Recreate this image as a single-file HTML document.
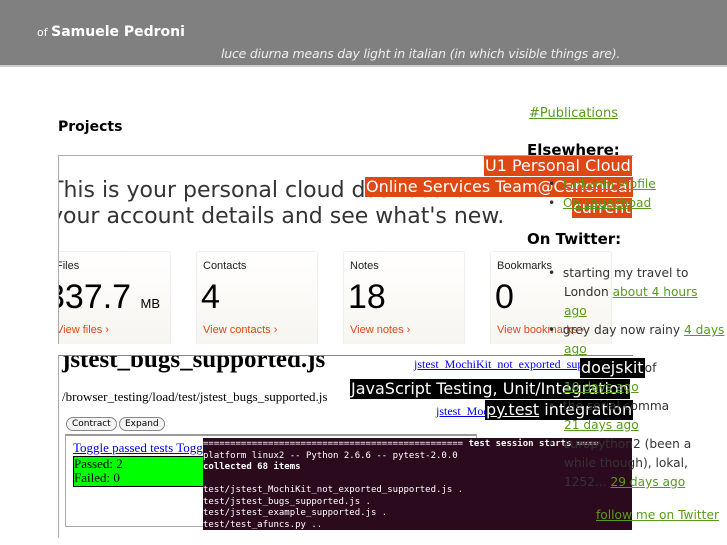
<!DOCTYPE html>
<html><head><meta charset="utf-8"><style>
body{margin:0;width:727px;height:545px;overflow:hidden;background:#fff;font-family:"DejaVu Sans","Liberation Sans",sans-serif;position:relative}
.a{position:absolute;white-space:nowrap}
a,.l{color:#5a9a1a;text-decoration:underline}
.or{background:#dd4814;color:#fff;font-size:16px;line-height:20px;padding:0 1px}
.bk{background:#000;color:#fff;font-size:16px;line-height:20px;padding:0 1px}
.tw{font-size:12.2px;color:#333;line-height:19px}
.card{position:absolute;top:95px;width:120px;height:100px;background:linear-gradient(#fff,#f6f4ee);border:1px solid #eee;border-radius:3px}
.card .t{position:absolute;left:6px;top:8px;font-size:11px;color:#222;font-family:"Liberation Sans",sans-serif}
.card .n{position:absolute;left:4px;top:26px;font-size:34px;color:#000;font-family:"Liberation Sans",sans-serif}
.card .v{position:absolute;left:6px;top:72px;font-size:11px;color:#dd4814;font-family:"Liberation Sans",sans-serif}
.ser{font-family:"Liberation Serif",serif}
.mono{font-family:"DejaVu Sans Mono","Liberation Mono",monospace;font-size:9px;color:#fff;line-height:11.5px}
</style></head><body>
<div class="a" style="left:0;top:0;width:727px;height:65px;background:#808080;border-bottom:2px solid #ccc"></div>
<div class="a" style="left:37px;top:24px;color:#fff;font-size:11px">of <span style="font-size:14px;font-weight:bold">Samuele Pedroni</span></div>
<div class="a" style="left:221px;top:46px;color:#eee;font-size:12.5px;font-style:italic;letter-spacing:-0.2px">luce diurna means day light in italian (in which visible things are).</div>
<div class="a" style="left:58px;top:119px;font-size:14px;font-weight:bold">Projects</div>
<div class="a l" style="left:529px;top:106px;font-size:13px">#Publications</div>

<!-- project 1 -->
<div class="a" style="left:58px;top:155px;width:574px;height:188px;border-top:1px solid #aaa;border-left:1px solid #aaa;overflow:hidden;background:#fff">
 <div class="a" style="left:-9px;top:22px;font-size:22px;color:#333;line-height:26px;font-family:'DejaVu Sans',sans-serif">This is your personal cloud dashboard<br>your account details and see what's new.</div>
 <div class="card" style="left:-10px"><div class="t">Files</div><div class="n" style="left:-4px">337.7 <span style="font-size:13px">MB</span></div><div class="v">View files ›</div></div>
 <div class="card" style="left:137px"><div class="t">Contacts</div><div class="n">4</div><div class="v">View contacts ›</div></div>
 <div class="card" style="left:284px"><div class="t">Notes</div><div class="n">18</div><div class="v">View notes ›</div></div>
 <div class="card" style="left:431px"><div class="t">Bookmarks</div><div class="n">0</div><div class="v">View bookmarks ›</div></div>
</div>
<div class="a or" style="left:484px;top:156px">U1 Personal Cloud</div>
<div class="a or" style="left:365px;top:177px">Online Services Team@Canonical</div>
<div class="a or" style="left:572px;top:198px">current</div>

<!-- project 2 -->
<div class="a" style="left:58px;top:355px;width:574px;height:182px;border-top:1px solid #888;border-left:1px solid #aaa;overflow:hidden;background:#fff">
 <div class="a ser" style="left:3px;top:-10px;font-size:25px;font-weight:bold">jstest_bugs_supported.js</div>
 <div class="a ser" style="left:3px;top:33px;font-size:13px">/browser_testing/load/test/jstest_bugs_supported.js</div>
 <div class="a ser" style="left:355px;top:1px;font-size:12px;color:#00e;text-decoration:underline">jstest_MochiKit_not_exported_supported</div>
 <div class="a ser" style="left:377px;top:48px;font-size:12px;color:#00e;text-decoration:underline">jstest_MochiKit</div>
 <div class="a" style="left:7px;top:61px;font-size:9px;border:1px solid #888;border-radius:7px;padding:1px 5px;background:#f4f4f4">Contract</div>
 <div class="a" style="left:60px;top:61px;font-size:9px;border:1px solid #888;border-radius:7px;padding:1px 5px;background:#f4f4f4">Expand</div>
 <div class="a" style="left:6px;top:78px;width:410px;height:90px;border:1px solid #aaa;border-top:2px solid #999"></div>
 <div class="a ser" style="left:14px;top:84px;font-size:13px;color:#00e;text-decoration:underline">Toggle passed tests Toggle</div>
 <div class="a ser" style="left:14px;top:100px;width:130px;height:29px;background:#0f0;border:1px solid #000;font-size:13px;line-height:14px">Passed: 2<br>Failed: 0</div>
 <div class="a" style="left:6px;top:183px;width:410px;border-top:1px solid #aaa"></div>
</div>
<div class="a" style="left:203px;top:438px;width:429px;height:92px;background:#2c0a1e"></div>
<div class="a mono" style="left:203px;top:439px">================================================ <b>test session starts</b> ====<br>platform linux2 -- Python 2.6.6 -- pytest-2.0.0<br><b>collected 68 items</b><br><br>test/jstest_MochiKit_not_exported_supported.js .<br>test/jstest_bugs_supported.js .<br>test/jstest_example_supported.js .<br>test/test_afuncs.py ..</div>
<div class="a bk" style="left:580px;top:358px">doejskit</div>
<div class="a bk" style="left:350px;top:379px">JavaScript Testing, Unit/Integration</div>
<div class="a bk" style="left:485px;top:400px"><u>py.test</u> integration</div>

<!-- sidebar -->
<div class="a" style="left:527px;top:141px;font-size:15px;font-weight:bold">Elsewhere:</div>
<div class="a tw" style="left:548px;top:175px">•&nbsp;&nbsp;<span class="l">LinkedIn Profile</span></div>
<div class="a tw" style="left:548px;top:194px">•&nbsp;&nbsp;<span class="l">On Launchpad</span></div>
<div class="a" style="left:527px;top:230px;font-size:15px;font-weight:bold">On Twitter:</div>
<div class="a tw" style="left:548px;top:264px">•&nbsp;&nbsp;starting my travel to</div>
<div class="a tw" style="left:564px;top:283px">London <span class="l">about 4 hours</span></div>
<div class="a tw" style="left:564px;top:302px"><span class="l">ago</span></div>
<div class="a tw" style="left:548px;top:321px">•&nbsp;&nbsp;grey day now rainy <span class="l">4 days</span></div>
<div class="a tw" style="left:564px;top:340px"><span class="l">ago</span></div>
<div class="a tw" style="left:548px;top:359px;z-index:-1">•&nbsp;&nbsp;I love games of</div>
<div class="a tw" style="left:564px;top:378px"><span class="l">10 days ago</span></div>
<div class="a tw" style="left:548px;top:397px">•&nbsp;&nbsp;the serial comma</div>
<div class="a tw" style="left:564px;top:416px"><span class="l">21 days ago</span></div>
<div class="a tw" style="left:548px;top:435px">•&nbsp;&nbsp;europython2 (been a</div>
<div class="a tw" style="left:564px;top:454px">while though), lokal,</div>
<div class="a tw" style="left:564px;top:473px">1252... <span class="l">29 days ago</span></div>
<div class="a tw" style="left:596px;top:506px"><span class="l">follow me on Twitter</span></div>
</body></html>
